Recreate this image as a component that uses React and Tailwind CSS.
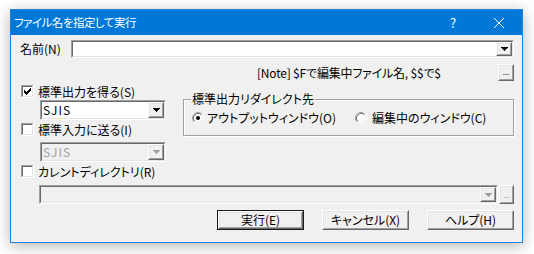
import React from 'react';

// classic 3D edges (Windows unthemed controls)
function Sunken({ className = '', innerClassName = '', children }) {
    return (
        <div className={`border border-t-[#a0a0a0] border-l-[#a0a0a0] border-b-white border-r-white ${className}`}>
            <div className={`h-full border border-t-[#696969] border-l-[#696969] border-b-[#e3e3e3] border-r-[#e3e3e3] ${innerClassName}`}>
                {children}
            </div>
        </div>
    );
}

function Raised({ className = '', innerClassName = '', children }) {
    return (
        <div className={`bg-[#f0f0f0] border border-t-white border-l-white border-b-[#696969] border-r-[#696969] ${className}`}>
            <div className={`h-full border border-t-[#e3e3e3] border-l-[#e3e3e3] border-b-[#a0a0a0] border-r-[#a0a0a0] flex items-center justify-center ${innerClassName}`}>
                {children}
            </div>
        </div>
    );
}

function Arrow({ disabled }) {
    const c = disabled ? '#a0a0a0' : '#000';
    return (
        <svg width="7" height="4" viewBox="0 0 7 4" shapeRendering="crispEdges">
            <rect x="0" y="0" width="7" height="1" fill={c} />
            <rect x="1" y="1" width="5" height="1" fill={c} />
            <rect x="2" y="2" width="3" height="1" fill={c} />
            <rect x="3" y="3" width="1" height="1" fill={c} />
        </svg>
    );
}

function Combo({ className = '', text, disabled }) {
    return (
        <Sunken className={className} innerClassName={`flex ${disabled ? 'bg-[#f0f0f0]' : 'bg-white'}`}>
            <div className={`flex-1 flex items-center pl-[1px] tracking-[1px] ${disabled ? 'text-[#a0a0a0]' : ''}`}>{text}</div>
            <Raised className="w-[16px] h-full">
                <Arrow disabled={disabled} />
            </Raised>
        </Sunken>
    );
}

const CHECK = [
    '......#',
    '.....##',
    '#...###',
    '##.###.',
    '#####..',
    '.###...',
    '..#....',
];

function Checkbox({ checked }) {
    return (
        <svg width="13" height="13" viewBox="0 0 13 13" shapeRendering="crispEdges" className="shrink-0">
            <rect width="13" height="13" fill="#fff" />
            <path d="M0 0h12v1H1v11H0z" fill="#a0a0a0" />
            <path d="M1 1h10v1H2v9H1z" fill="#696969" />
            <path d="M11 1h1v11H1v-1h10z" fill="#e3e3e3" />
            {checked && CHECK.map((row, y) =>
                row.split('').map((ch, x) => ch === '#' ? <rect key={`${x}-${y}`} x={3 + x} y={3 + y} width="1" height="1" fill="#000" /> : null)
            )}
        </svg>
    );
}

function Radio({ checked }) {
    return (
        <svg width="12" height="12" viewBox="0 0 12 12" className="shrink-0">
            <circle cx="6" cy="6" r="5" fill="#fff" />
            <path d="M9.89 2.11A5.5 5.5 0 0 0 2.11 9.89" stroke="#a0a0a0" fill="none" />
            <path d="M2.11 9.89A5.5 5.5 0 0 0 9.89 2.11" stroke="#fff" fill="none" />
            <path d="M9.18 2.82A4.5 4.5 0 0 0 2.82 9.18" stroke="#696969" fill="none" />
            <path d="M2.82 9.18A4.5 4.5 0 0 0 9.18 2.82" stroke="#e3e3e3" fill="none" />
            {checked && <circle cx="6" cy="6" r="2" fill="#000" />}
        </svg>
    );
}

function Button({ children, isDefault }) {
    const btn = <Raised className="h-full">{children}</Raised>;
    if (isDefault) {
        return <div className="w-[87px] h-full border border-[#1a1a1a]">{btn}</div>;
    }
    return <div className="w-[87px] h-full">{btn}</div>;
}

export default function App() {
    return (
        <div className="w-[534px] h-[254px] bg-white pl-[10px] pt-[9px] text-[12px] leading-none text-black font-['Noto_Sans_CJK_JP','Noto_Sans_CJK_SC',sans-serif] [font-feature-settings:'palt']">
            <div className="w-[513px] h-[234px] flex flex-col bg-[#f0f0f0] border border-[#1a84da] shadow-[0_3px_14px_rgba(0,0,0,0.3)]">
                {/* title bar */}
                <div className="h-[25px] shrink-0 bg-[#0078d7] text-white flex items-center">
                    <span className="pl-[3px] text-[11.5px] tracking-[-0.5px]">ファイル名を指定して実行</span>
                    <div className="ml-auto w-[46px] h-full flex items-center justify-center text-[13px]">?</div>
                    <div className="w-[46px] h-full flex items-center justify-center">
                        <svg width="10" height="10" viewBox="0 0 10 10">
                            <path d="M0 0L10 10M10 0L0 10" stroke="#fff" strokeWidth="1" />
                        </svg>
                    </div>
                </div>

                <div className="flex-1 flex flex-col pl-[9px] pr-[8px]">
                    {/* name */}
                    <div className="mt-[5px] h-[18px] flex items-center">
                        <span className="w-[51px]">名前(N)</span>
                        <Combo className="flex-1 h-full" />
                    </div>

                    <div className="mt-[6px] h-[17px] flex items-center">
                        <span className="ml-[237px] tracking-[-0.2px]">[Note] $Fで編集中ファイル名, $$で$</span>
                        <Raised className="ml-auto w-[16px] h-full" innerClassName="items-end pb-[3px]">
                            <span className="text-[8px] leading-none">...</span>
                        </Raised>
                    </div>

                    <div className="mt-[4px] flex">
                        <div className="w-[163px] flex flex-col">
                            <div className="h-[13px] flex items-center">
                                <span className="ml-[1px]"><Checkbox checked /></span>
                                <span className="ml-[4px]">標準出力を得る(S)</span>
                            </div>
                            <Combo className="mt-[2px] ml-[20px] w-[126px] h-[20px]" text="SJIS" />
                            <div className="mt-[3px] h-[13px] flex items-center">
                                <span className="ml-[1px]"><Checkbox /></span>
                                <span className="ml-[4px]">標準入力に送る(I)</span>
                            </div>
                            <Combo className="mt-[6px] ml-[20px] w-[126px] h-[20px]" text="SJIS" disabled />
                            <div className="mt-[3px] h-[13px] flex items-center">
                                <span className="ml-[1px]"><Checkbox /></span>
                                <span className="ml-[4px]">カレントディレクトリ(R)</span>
                            </div>
                        </div>

                        <fieldset className="mt-[7px] flex-1 h-[44px] border border-[#a0a0a0] shadow-[inset_1px_1px_0_#fff,1px_1px_0_#fff]">
                            <legend className="ml-[7px] px-[1px] leading-[14px] bg-[#f0f0f0]">標準出力リダイレクト先</legend>
                            <div className="mt-[6px] h-[12px] flex items-center pl-[8px]">
                                <div className="w-[163px] flex items-center">
                                    <Radio checked />
                                    <span className="ml-[3px]">アウトプットウィンドウ(O)</span>
                                </div>
                                <div className="flex items-center">
                                    <Radio />
                                    <span className="ml-[5px]">編集中のウィンドウ(C)</span>
                                </div>
                            </div>
                        </fieldset>
                    </div>

                    {/* current directory */}
                    <div className="mt-[7px] h-[19px] flex">
                        <Combo className="ml-[19px] w-[459px] h-full" disabled />
                        <Raised className="ml-[1px] w-[15px] h-full" innerClassName="items-end pb-[3px]">
                            <span className="text-[8px] leading-none text-[#a0a0a0]">...</span>
                        </Raised>
                    </div>

                    <div className="mt-[6px] h-[20px] flex justify-end gap-[18px]">
                        <Button isDefault>実行(E)</Button>
                        <Button>キャンセル(X)</Button>
                        <Button>ヘルプ(H)</Button>
                    </div>
                </div>
            </div>
        </div>
    );
}
